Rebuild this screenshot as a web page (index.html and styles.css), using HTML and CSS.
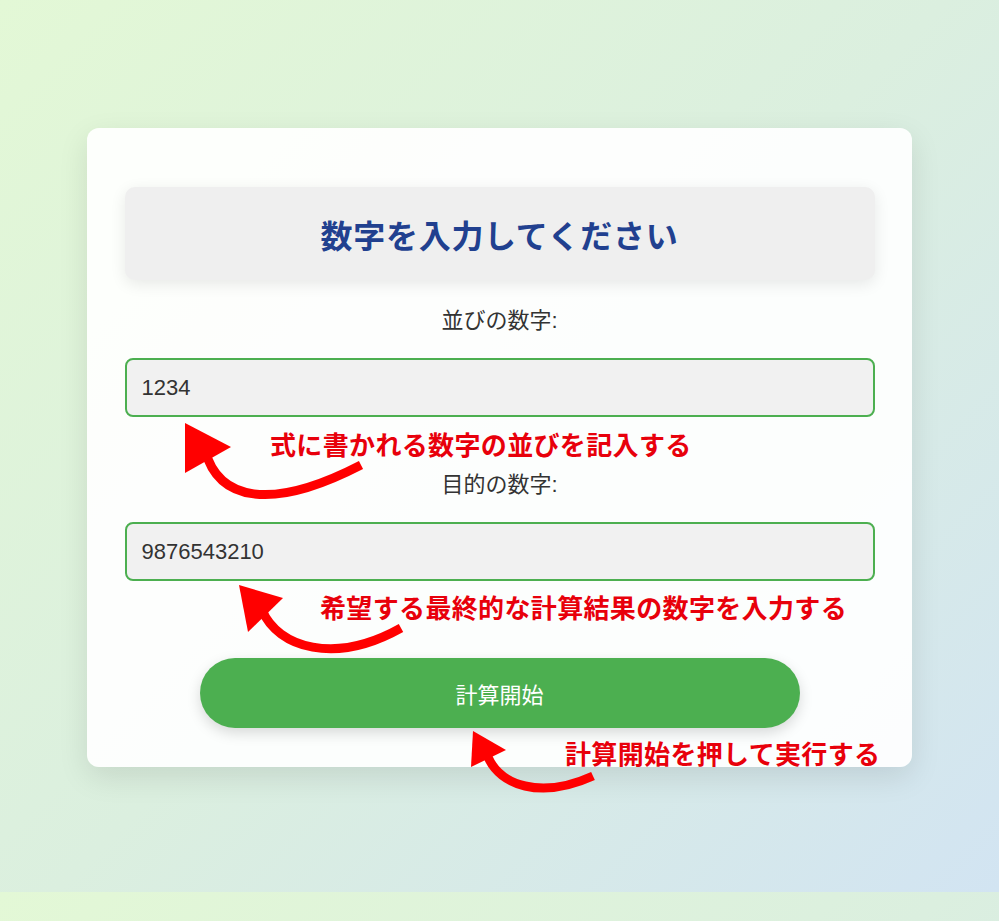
FILE: index.html
```html
<!DOCTYPE html>
<html lang="ja">
<head>
<meta charset="utf-8">
<title>数字を入力してください</title>
<link rel="stylesheet" href="styles.css">
</head>
<body>
<div class="card">
  <div class="title-box">
    <h1 class="title">数字を入力してください</h1>
  </div>
  <div class="field">
    <label class="label" for="seq">並びの数字:</label>
    <input class="input" id="seq" type="text" value="1234">
  </div>
  <div class="field field-second">
    <label class="label" for="target">目的の数字:</label>
    <input class="input" id="target" type="text" value="9876543210">
  </div>
  <div class="actions">
    <button class="btn" type="button">計算開始</button>
  </div>

  <svg class="arrows" width="825" height="700" viewBox="0 0 825 700" aria-hidden="true">
    <g transform="translate(-87,-128)">
      <path class="shaft" d="M205 450 C218 500, 270 512, 361 465"/>
      <polygon class="head" points="185,423 185,473 231,447"/>
      <path class="shaft" d="M262 610 C278 648, 335 665, 401 628"/>
      <polygon class="head" points="239,585 248,632 283,598"/>
      <path class="shaft" d="M488 757 C500 785, 540 800, 593 776"/>
      <polygon class="head" points="473,731 471,767 506,750"/>
    </g>
  </svg>
  <span class="note note-1">式に書かれる数字の並びを記入する</span>
  <span class="note note-2">希望する最終的な計算結果の数字を入力する</span>
  <span class="note note-3">計算開始を押して実行する</span>
</div>
</body>
</html>
```

FILE: styles.css
```css
html {
  margin: 0;
}

body {
  margin: 0;
  box-sizing: border-box;
  min-height: 892px;
  padding-top: 3px;
  display: flex;
  align-items: center;
  justify-content: center;
  background: linear-gradient(135deg, #e3f8d6 0%, #dbefdf 50%, #d2e4f2 100%);
  font-family: "Liberation Sans", "Noto Sans CJK JP", sans-serif;
  color: #333;
}

.card {
  position: relative;
  box-sizing: border-box;
  width: 825px;
  padding: 59px 37.5px 39px;
  background: rgba(255, 255, 255, 0.92);
  border-radius: 12px;
  box-shadow: 0 10px 30px rgba(0, 0, 0, 0.1);
}

.title-box {
  height: 93px;
  display: flex;
  align-items: center;
  justify-content: center;
  background: #efefef;
  border-radius: 10px;
  box-shadow: 0 4px 16px rgba(0, 0, 0, 0.09);
}

.title {
  margin: 0;
  font-family: "Noto Sans CJK JP", sans-serif;
  font-size: 32px;
  font-weight: 700;
  letter-spacing: 0.7px;
  color: #21408f;
  line-height: 1;
}

.field {
  display: flex;
  flex-direction: column;
  margin-top: 25px;
}

.field-second {
  margin-top: 52px;
}

.label {
  display: block;
  text-align: center;
  font-size: 22px;
  line-height: 32px;
  color: #333;
  margin-bottom: 21px;
}

.input {
  box-sizing: border-box;
  width: 100%;
  height: 59px;
  padding: 0 15px;
  border: 2px solid #4caf50;
  border-radius: 8px;
  background: #f1f1f1;
  font-family: "Liberation Sans", sans-serif;
  font-size: 22px;
  color: #333;
  outline: none;
}

.actions {
  display: flex;
  justify-content: center;
  margin-top: 77px;
}

.btn {
  width: 600px;
  height: 70px;
  border: none;
  border-radius: 35px;
  background: #4caf50;
  color: #fff;
  font-family: "Liberation Sans", "Noto Sans CJK JP", sans-serif;
  font-size: 22px;
  box-shadow: 0 5px 14px rgba(0, 0, 0, 0.15);
  cursor: pointer;
}

.arrows {
  position: absolute;
  left: 0;
  top: 0;
  overflow: visible;
  pointer-events: none;
}

.shaft {
  fill: none;
  stroke: #ff0000;
  stroke-width: 9;
  stroke-linecap: butt;
}

.head {
  fill: #ff0000;
}

.note {
  position: absolute;
  white-space: nowrap;
  font-family: "Noto Sans CJK JP", sans-serif;
  font-weight: 700;
  font-size: 26px;
  line-height: 26px;
  letter-spacing: 0.35px;
  color: #e8000b;
}

.note-1 {
  left: 183px;
  top: 303px;
}

.note-2 {
  left: 233px;
  top: 466px;
}

.note-3 {
  left: 478px;
  top: 612px;
}
```
